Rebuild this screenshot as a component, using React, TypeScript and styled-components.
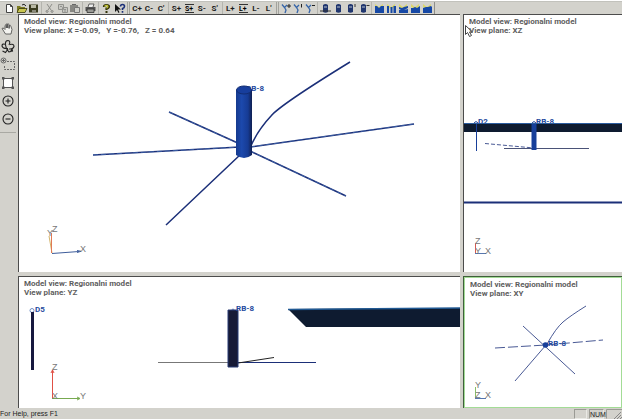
import React from "react";
import styled, { createGlobalStyle } from "styled-components";

const BLUE = "#173f9a";
const INK = "#1b2f78";
const FACE = "#d3d2cc";

const GlobalStyle = createGlobalStyle`
  * { box-sizing: border-box; }
  html, body { margin: 0; background: #fff; }
  body { font-family: "Liberation Sans", Arial, sans-serif; font-size: 8px; color: #222; overflow: hidden; }
`;

const Window = styled.div`
  display: flex;
  flex-direction: column;
  height: calc(100vh - 2px);
  margin: 1px 4px 1px 0;
  background: ${FACE};
`;

const Toolbar = styled.header`
  display: flex;
  flex: none;
  height: 13px;
  padding-left: 1px;
  border-top: 1px solid #c2c2bc;
`;

const ToolGroup = styled.div<{ $width: number; $gripped?: boolean }>`
  display: flex;
  flex: none;
  width: ${(p) => p.$width}px;
  padding: 0 1px;
  border-left: ${(p) => (p.$gripped ? "3px double #a3a39d" : "1px solid #b4b4ae")};
  &:first-child { border-left-color: transparent; }
`;

const ToolbarEnd = styled.div`
  flex: 1;
  border-left: 1px solid #8f8f8a;
`;

const ToolButton = styled.button`
  display: flex;
  flex: 1;
  align-items: center;
  justify-content: center;
  min-width: 0;
  padding: 0;
  border: 0;
  background: none;
  color: #1d1d1d;
  font: bold 8px Roboto, "Liberation Sans", sans-serif;
`;

const Glyph = styled.svg`
  display: block;
  flex: none;
  width: 11px;
  height: 11px;
  overflow: visible;
`;

const Body = styled.div`
  display: flex;
  flex: 1;
  min-height: 0;
`;

const SideBar = styled.nav`
  display: flex;
  flex: none;
  flex-direction: column;
  align-items: center;
  gap: 2px;
  width: 18px;
  padding: 6px 2px 0 0;
  border-top: 1px solid #b9b9b3;
`;

const SideButton = styled.button`
  display: grid;
  place-items: center;
  width: 16px;
  height: 16px;
  padding: 0;
  border: 0;
  background: none;
`;

const SideGlyph = styled.svg`
  display: block;
  width: 16px;
  height: 16px;
  overflow: visible;
`;

const SideRule = styled.hr`
  width: 16px;
  height: 1px;
  margin: 3px 0 0;
  border: 0;
  background: #a9a9a3;
`;

const Views = styled.main`
  display: grid;
  flex: 1;
  min-width: 0;
  grid-template-columns: 442fr 159fr;
  grid-template-rows: 258fr 132fr;
  gap: 4px 3px;
`;

const Pane = styled.section<{ $active?: boolean }>`
  display: grid;
  min-width: 0;
  min-height: 0;
  overflow: hidden;
  padding: ${(p) => (p.$active ? "1px" : "0")};
  background: ${(p) => (p.$active ? "#a3dc96" : "#fff")};
  border-style: solid;
  border-width: 1px 0 0 1px;
  border-color: ${(p) => (p.$active ? "#3f5f3b" : "#4c4c4c")};
`;

const Caption = styled.h2`
  grid-area: 1 / 1;
  z-index: 1;
  margin: 0;
  padding: 2px 5px;
  color: #5e5e5e;
  font: bold 8px/9px Roboto, "Liberation Sans", sans-serif;
  white-space: pre;
`;

const Scene = styled.svg`
  grid-area: 1 / 1;
  display: block;
  width: 100%;
  height: 100%;
  min-height: 0;
  background: #fff;
`;

const WellLabel = styled.text`
  fill: #254a9e;
  font: bold 8px Roboto, "Liberation Sans", sans-serif;
`;

const AxisLabel = styled.text`
  fill: #777;
  font: 9px "Liberation Sans", Arial, sans-serif;
`;

const StatusBar = styled.footer`
  display: flex;
  flex: none;
  align-items: stretch;
  gap: 2px;
  height: 11px;
  padding-top: 1px;
  color: #222;
  font: 7px/10px "Liberation Sans Narrow", "Liberation Sans", Arial, sans-serif;
`;

const StatusText = styled.span`
  flex: 1;
`;

const StatusCell = styled.span<{ $width: number }>`
  width: ${(p) => p.$width}px;
  border: 1px solid;
  border-color: #9a9a94 #e9e9e4 #e9e9e4 #9a9a94;
  line-height: 9px;
  text-align: center;
`;

const Grip = styled.svg`
  display: block;
  width: 16px;
  height: 10px;
`;

type PaneProps = { plane: string; box: string; active?: boolean; children: React.ReactNode };

function ModelView({ plane, box, active, children }: PaneProps) {
  return (
    <Pane $active={active} aria-label={`View plane ${plane}`}>
      <Caption>{`Model view: Regionalni model\nView plane: ${plane}`}</Caption>
      <Scene viewBox={box} preserveAspectRatio="xMinYMin slice">
        {children}
      </Scene>
    </Pane>
  );
}

const fileIcons: [string, React.ReactNode][] = [
  ["New", <path d="M2.500 1.500h4l2 2v6h-6zM6.500 1.500v2h2" fill="#fff" stroke="#444" />],
  ["Open", <><path d="M1 9V3h3l1 1h4v5z" fill="#7c7b22" /><path d="M1 9.500l2-4h8l-2 4z" fill="#c9c650" stroke="#37370f" strokeWidth=".8" /><path d="M6 2q2-2 4 1" fill="none" stroke="#222" /></>],
  ["Save", <><path d="M1 1.500h9v8H1z" fill="#3b3c20" /><path d="M3 2h5v3H3z" fill="#b9b9a4" /><path d="M4 7h4v2H4z" fill="#8a8a7c" /></>],
];

const editIcons: [string, React.ReactNode][] = [
  ["Cut", <path d="M3 1l4 6M8 1L4 7M3 7.500a1 1 0 1 0 .1 0M8 7.500a1 1 0 1 0 .1 0" fill="none" stroke="#8e8e8a" />],
  ["Copy", <path d="M1.500 1.500h5v5h-5zM5.500 4.500h5v5h-5zM7 6.500h2M7 8h2M3 3.500h2" fill="#c7c7c2" stroke="#92928e" />],
  ["Paste", <><path d="M1 2h8v7H1z" fill="#878783" /><path d="M5.500 4.500h5v5h-5z" fill="#cfcfca" stroke="#777" /><path d="M3 1.500h4" stroke="#666" /></>],
];

const printIcons: [string, React.ReactNode][] = [
  ["Print", <><path d="M3 4l1-3h5l-1 3" fill="#eee" stroke="#444" strokeWidth=".8" /><path d="M.5 4h10v4h-10z" fill="#555" /><path d="M2 6h7v3.500H2z" fill="#9a9a95" stroke="#333" strokeWidth=".8" /></>],
];

const helpIcons: [string, React.ReactNode][] = [
  ["About", <><path d="M3 4V3.500q0-1.500 2.500-1.500T8 3.500Q8 5 5.500 5.500V7" fill="none" stroke="#33330a" strokeWidth="2.200" /><path d="M3.500 3.500Q4 2.300 5.500 2.300t1.500 1.200Q7 4.500 5.500 5.300" fill="none" stroke="#c5c42c" strokeWidth="1.200" /><path d="M4.500 8h2v2h-2z" fill="#33330a" /></>],
  ["Context help", <><path d="M1 1v8l2-2 1.500 3 1-.7L4 6.500h3z" fill="#111" /><path d="M6.500 3.500Q6.500 1.500 8.500 1.500t2 1.800Q10.500 5 8.500 5.500V7M8.500 8v1.800" fill="none" stroke="#1b2f78" strokeWidth="1.600" /></>],
];

const textGroups = ["C", "S", "L"];

function LetterTools({ letter }: { letter: string }) {
  const marks = letter === "C" ? ["+", "-", "'"] : ["+", "±", "-", "'"];
  return (
    <ToolGroup $width={letter === "C" ? 41 : 54} $gripped={letter === "C"}>
      {marks.map((m) =>
        m === "±" ? (
          <ToolButton key={m} aria-label={`${letter} range`}>
            <Glyph viewBox="0 0 11 11">
              <path d="M1 1.500h9M1 9.500h9" stroke="#333" />
              <text x="1" y="8" fontSize="7">{letter}+</text>
            </Glyph>
          </ToolButton>
        ) : (
          <ToolButton key={m}>{letter + m}</ToolButton>
        )
      )}
    </ToolGroup>
  );
}

const branchMarks = ["M8 1v4M6 3h4", "M8.500 1v3.500", "M7 2.500h3"];
const tankMarks = ["M0 8h11", "", "M10 1v3", "M8.500 2.500h3"];
const areaShapes = [
  "M1 3h2l2 2 2-2h3v7H1z",
  "M1 3h2v7H1zM4.500 4h2v6h-2zM7.500 3h2.500v7H7.500z",
  "M1 4l3 1 2-1 4-1v2L6 7l4-1v4H1V7l2 0-2-1z",
  "M1 5l2 0 2-1 2 1 3-2v7H1z",
  "M1 5l3-1 2 0 3-1 1 1v6H1z",
];

function IconTools({ icons, width }: { icons: [string, React.ReactNode][]; width: number }) {
  return (
    <ToolGroup $width={width}>
      {icons.map(([name, art]) => (
        <ToolButton key={name} aria-label={name}>
          <Glyph viewBox="0 0 11 11">{art}</Glyph>
        </ToolButton>
      ))}
    </ToolGroup>
  );
}

const sideTools: [string, React.ReactNode][] = [
  ["Pan", <path d="M5.500 13L3 9 2 7.500q1-1 2 0l1 1V4.500q.6-1 1.300 0V7 3q.8-1 1.400 0v4-3.500q.8-1 1.400 0V7.500l.3-3q1-.7 1.300.3L12 8.500 11 13z" fill="#f3f3ef" stroke="#444" strokeWidth=".8" />],
  ["Rotate", <g fill="none" stroke="#222" strokeWidth="1.100"><path d="M9 6Q11 2 8 1.500 5 1.500 5.500 6T9 13q2 0 3-2.500M6 5.500Q2 4 2 7q1 3 6 2.500M10 5.500q4-1 4 2-1 3-5 2.500M8 10l-2.500 3.500L2.500 12M12 9.500l.5 2.500-2.500.5" /></g>],
  ["Zoom window", <g fill="none" stroke="#666"><circle cx="3.500" cy="3.500" r="2.500" /><path d="M2 3.500h3M3.500 2v3" /><path d="M4.500 9v3.500h10v-8H7" strokeDasharray="2 1" /></g>],
  ["Fit", <><path d="M3.500 3.500h9v9h-9z" fill="#fff" stroke="#555" /><path d="M2 2h2.500v2.500H2zM11.500 2H14v2.500h-2.500zM2 11.500h2.500V14H2zM11.500 11.500H14V14h-2.500z" fill="#555" /></>],
  ["Zoom in", <g fill="none" stroke="#222" strokeWidth="1.100"><circle cx="8" cy="8" r="5" /><path d="M5.500 8h5M8 5.500v5" /></g>],
  ["Zoom out", <g fill="none" stroke="#222" strokeWidth="1.100"><circle cx="8" cy="8" r="5" /><path d="M5.500 8h5" /></g>],
];

export default function App() {
  return (
    <>
      <GlobalStyle />
      <Window>
        <Toolbar>
          <IconTools icons={fileIcons} width={40} />
          <IconTools icons={editIcons} width={41} />
          <IconTools icons={printIcons} width={16} />
          <IconTools icons={helpIcons} width={29} />
          {textGroups.map((l) => (
            <LetterTools key={l} letter={l} />
          ))}
          <ToolGroup $width={41} $gripped>
            {branchMarks.map((d) => (
              <ToolButton key={d} aria-label="Branch">
                <Glyph viewBox="0 0 11 11">
                  <path d="M1 1.500l2.500 3L6 2M3.500 4.500L5 7l-1 3" fill="none" stroke="#3564a8" strokeWidth="1.300" />
                  <path d={d} stroke="#222" fill="none" />
                </Glyph>
              </ToolButton>
            ))}
          </ToolGroup>
          <ToolGroup $width={54}>
            {tankMarks.map((d, i) => (
              <ToolButton key={i} aria-label="Well">
                <Glyph viewBox="0 0 11 11">
                  <path d="M3 2q2.500-2 5 0v7q-2.500 1.500-5 0z" fill="#20366f" />
                  <path d="M4 4h3" stroke="#b8c2cf" />
                  <path d={d} stroke="#333" />
                </Glyph>
              </ToolButton>
            ))}
          </ToolGroup>
          <ToolGroup $width={63}>
            {areaShapes.map((d) => (
              <ToolButton key={d} aria-label="Layer">
                <Glyph viewBox="0 0 11 11">
                  <path d="M1 1l4 3 4-3v3L5 6 1 4z" fill="#dcd76a" />
                  <path d={d} fill="#1648a5" />
                </Glyph>
              </ToolButton>
            ))}
          </ToolGroup>
          <ToolbarEnd />
        </Toolbar>

        <Body>
          <SideBar>
            {sideTools.map(([name, art]) => (
              <SideButton key={name} aria-label={name}>
                <SideGlyph viewBox="0 0 16 16">{art}</SideGlyph>
              </SideButton>
            ))}
            <SideRule />
          </SideBar>

          <Views>
            <ModelView plane="X =-0.09,   Y =-0.76,   Z = 0.64" box="19 15 441 257">
              <defs>
                <linearGradient id="pipe">
                  <stop offset="0" stopColor="#153a8e" />
                  <stop offset=".35" stopColor="#1c49ad" />
                  <stop offset=".75" stopColor="#163b94" />
                  <stop offset="1" stopColor="#101f50" />
                </linearGradient>
              </defs>
              <g fill="none" stroke={INK} strokeWidth="1.500">
                <path d="M169 112L240 144M93 155L240 147M166 225L241 154" />
                <path d="M250 148Q257 131 271 116 280 105 350 62" />
                <path d="M250 147L414 124M250 151L346 196" />
              </g>
              <g fill="none" stroke="#4c79bd" strokeWidth=".6" strokeDasharray="5 3">
                <path d="M93 155L240 147M250 147L414 124M169 112L240 144M250 151L346 196" />
              </g>
              <WellLabel x="246" y="91">RB-8</WellLabel>
              <path d="M236 90v65q8 6 16 0V90z" fill="url(#pipe)" />
              <ellipse cx="244" cy="90" rx="7.500" ry="4" fill="#173e9d" stroke="#122d72" />
              <path d="M52 253L49 236" fill="none" stroke="#d3b46a" />
              <path d="M51.500 253V233" fill="none" stroke="#e07a55" />
              <path d="M52 253.500L79 251.500M77 250.500l4 .8-4 1.200" fill="none" stroke="#3e5d9b" />
              <AxisLabel x="52" y="232">Z</AxisLabel>
              <AxisLabel x="47" y="236">Y</AxisLabel>
              <AxisLabel x="80" y="252">X</AxisLabel>
            </ModelView>

            <ModelView plane="XZ" box="464 15 158 257">
              <WellLabel x="478" y="124">D2</WellLabel>
              <WellLabel x="536" y="124">RB-8</WellLabel>
              <path d="M474 123q2-3 4 0M532 123q2-3 4 0" stroke={BLUE} fill="none" />
              <path d="M464 123h158v9H464z" fill="#0e1b30" />
              <path d="M464 123.500h158" stroke="#2b5c9f" />
              <path d="M476.500 124v27" stroke={BLUE} />
              <path d="M485 143.500L534 148" stroke={INK} strokeWidth=".8" strokeDasharray="4 2" />
              <path d="M504 148.500h85" stroke="#4a5277" />
              <path d="M531.500 124h5v26h-5z" fill={BLUE} />
              <path d="M464 202.500h158" stroke={INK} strokeWidth="2" />
              <path d="M475.500 253V243" stroke="#d45b50" />
              <path d="M475 253.500h11" stroke="#5876ae" />
              <AxisLabel x="475" y="244">Z</AxisLabel>
              <AxisLabel x="475" y="254">Y</AxisLabel>
              <AxisLabel x="485" y="254">X</AxisLabel>
              <path d="M465.500 25.500v9l2-2 2 4 2-1-2-3.500h3z" fill="#fff" stroke="#444" />
            </ModelView>

            <ModelView plane="YZ" box="19 277 441 131">
              <circle cx="32" cy="310.500" r="2" fill="none" stroke="#6f8fc7" />
              <path d="M31 312h3v58h-3z" fill="#17183f" />
              <WellLabel x="35" y="312">D5</WellLabel>
              <path d="M158 362.500h70" stroke="#777" />
              <path d="M238 362.500h78" stroke={INK} />
              <path d="M238 363L274 357.500" stroke="#222" />
              <path d="M231 311q2-4 4 0" fill="none" stroke="#6f8fc7" />
              <path d="M228 310h10v57h-10z" fill="#171a36" stroke="#283b75" />
              <WellLabel x="236" y="311">RB-8</WellLabel>
              <path d="M288 309L460 308v19H306z" fill="#0e1b30" />
              <path d="M288 309.500L460 308" stroke="#205993" strokeWidth="1.500" />
              <path d="M52.500 398V370M51 373l1.500-3 1.500 3" fill="none" stroke="#e05045" />
              <path d="M52 398.500h27M77 397l3 1.500-3 1.500" fill="none" stroke="#77a950" />
              <AxisLabel x="52" y="370">Z</AxisLabel>
              <AxisLabel x="52" y="399">X</AxisLabel>
              <AxisLabel x="80" y="399">Y</AxisLabel>
            </ModelView>

            <ModelView plane="XY" box="465 278 156 129" active>
              <g fill="none" stroke={INK} strokeWidth=".8">
                <path d="M523 326L575 374M515 381L546 345" />
                <path d="M547 344Q556 328 563 322T586 306" />
                <path d="M495 348L546 345L603 340" strokeDasharray="10 3" />
              </g>
              <circle cx="545.500" cy="345" r="2.800" fill={BLUE} />
              <WellLabel x="548" y="346">RB-8</WellLabel>
              <path d="M475.500 398V387" stroke="#8ac069" />
              <path d="M475 398.500h11" stroke="#5876ae" />
              <AxisLabel x="475" y="388">Y</AxisLabel>
              <AxisLabel x="475" y="398">Z</AxisLabel>
              <AxisLabel x="485" y="398">X</AxisLabel>
            </ModelView>
          </Views>
        </Body>

        <StatusBar>
          <StatusText>For Help, press F1</StatusText>
          <StatusCell $width={13} />
          <StatusCell $width={15}>NUM</StatusCell>
          <Grip viewBox="0 0 16 10">
            <path d="M.5 9.500V.5H16" fill="none" stroke="#9a9a94" />
            <path d="M8 10l7-7M11 10l4-4M14 10l2-2" stroke="#888" />
          </Grip>
        </StatusBar>
      </Window>
    </>
  );
}
